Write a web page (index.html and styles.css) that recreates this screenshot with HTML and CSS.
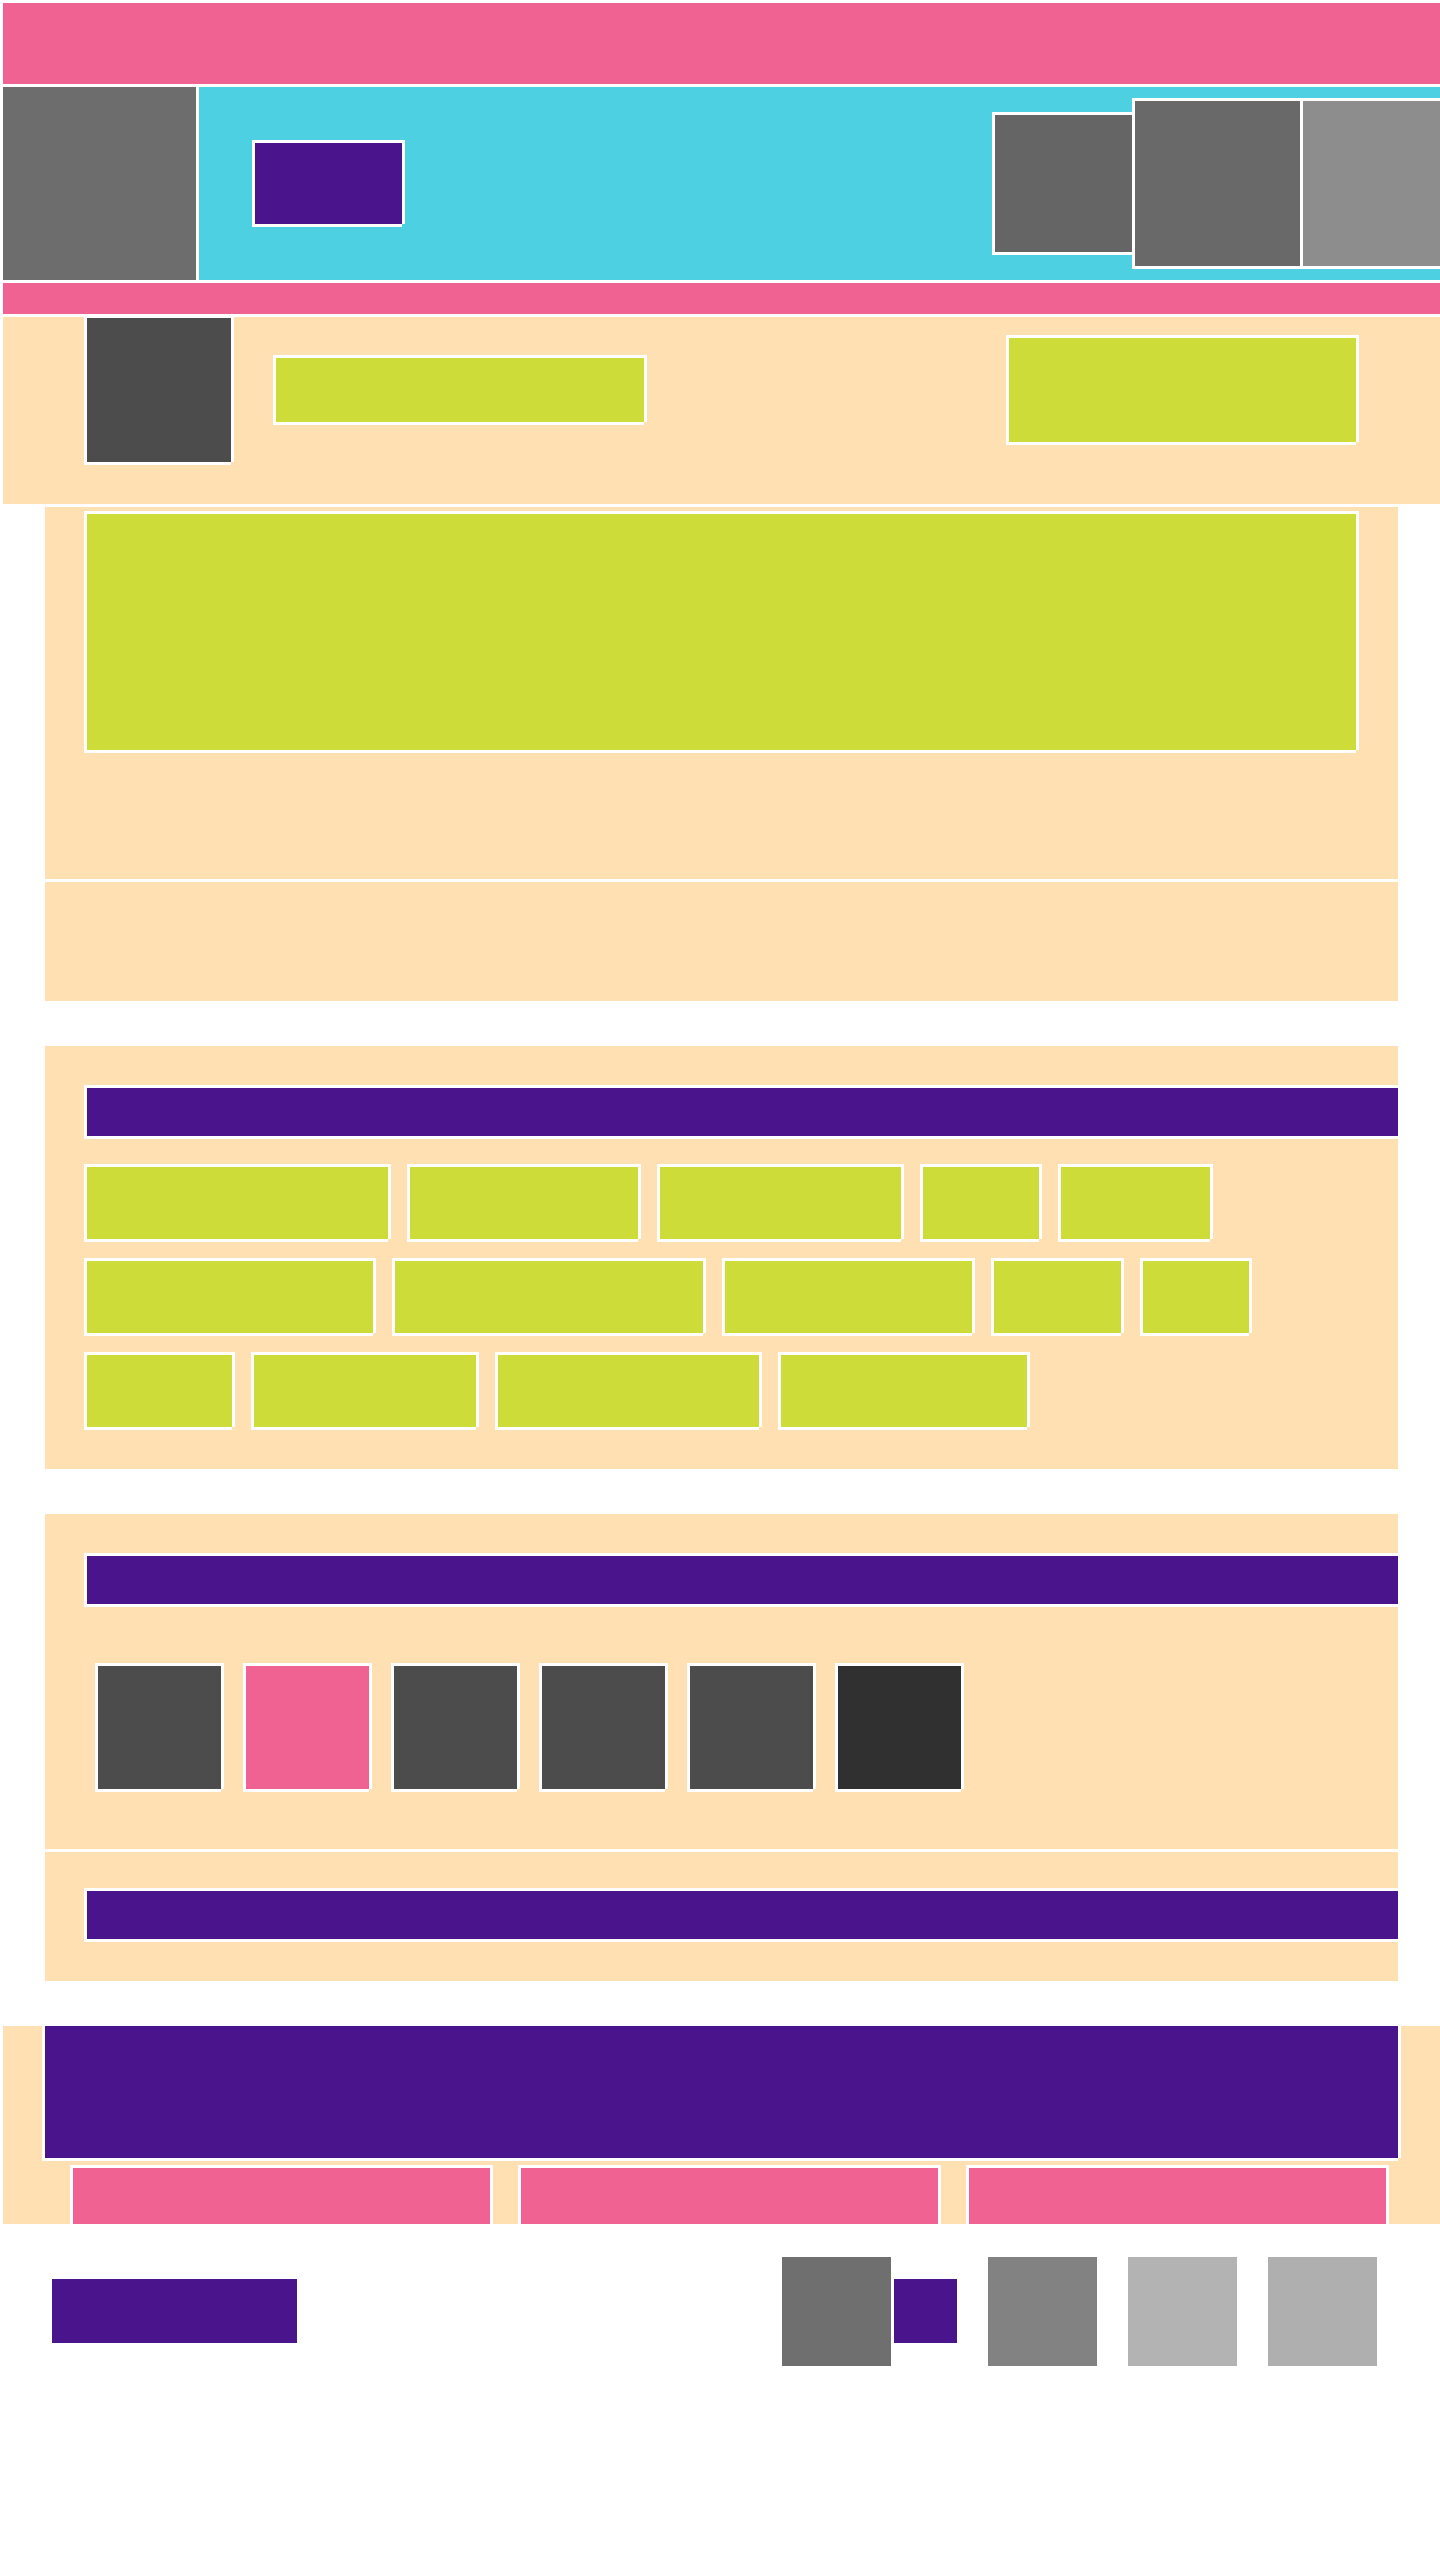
FILE: index.html
```html
<!DOCTYPE html>
<html lang="en">
<head>
<meta charset="utf-8">
<meta name="viewport" content="width=device-width, initial-scale=1">
<title>Page layout</title>
<link rel="stylesheet" href="styles.css">
</head>
<body>
<div class="page">
  <div class="banner"></div>
  <header class="topbar">
    <div class="block logo"></div>
    <div class="block brand"></div>
    <div class="actions">
      <div class="block action action-small"></div>
      <div class="block action"></div>
      <div class="block action action-last"></div>
    </div>
  </header>
  <div class="strip"></div>
  <section class="profile">
    <div class="block avatar"></div>
    <div class="block name"></div>
    <div class="block cta"></div>
  </section>
  <main class="content">
    <section class="group">
      <div class="panel summary"><div class="block summary-body"></div></div>
      <div class="panel note"></div>
    </section>
    <section class="group">
      <div class="panel">
        <div class="block heading"></div>
        <div class="tags">
          <div class="tag-row">
            <div class="block tag" style="width:301px"></div>
            <div class="block tag" style="width:228px"></div>
            <div class="block tag" style="width:241px"></div>
            <div class="block tag" style="width:116px"></div>
            <div class="block tag" style="width:149px"></div>
          </div>
          <div class="tag-row">
            <div class="block tag" style="width:286px"></div>
            <div class="block tag" style="width:308px"></div>
            <div class="block tag" style="width:247px"></div>
            <div class="block tag" style="width:127px"></div>
            <div class="block tag" style="width:106px"></div>
          </div>
          <div class="tag-row">
            <div class="block tag" style="width:145px"></div>
            <div class="block tag" style="width:222px"></div>
            <div class="block tag" style="width:261px"></div>
            <div class="block tag" style="width:246px"></div>
          </div>
        </div>
      </div>
    </section>
    <section class="group">
      <div class="panel gallery">
        <div class="block heading"></div>
        <div class="tiles">
          <div class="block tile"></div>
          <div class="block tile tile-pink"></div>
          <div class="block tile"></div>
          <div class="block tile"></div>
          <div class="block tile"></div>
          <div class="block tile tile-dark"></div>
        </div>
      </div>
      <div class="panel closing"><div class="block heading"></div></div>
    </section>
  </main>
  <section class="promo">
    <div class="block promo-title"></div>
    <div class="columns">
      <div class="block column"></div>
      <div class="block column"></div>
      <div class="block column"></div>
    </div>
  </section>
  <footer class="footer">
    <div class="copyright"></div>
    <div class="links">
      <div class="link-pair">
        <div class="link link-1"></div>
        <div class="link-label"></div>
      </div>
      <div class="link link-2"></div>
      <div class="link link-3"></div>
      <div class="link link-4"></div>
    </div>
  </footer>
</div>
</body>
</html>
```

FILE: styles.css
```css
:root {
  --pink: #f06292;
  --cyan: #4dd0e1;
  --peach: #ffe0b2;
  --lime: #cddc39;
  --purple: #4a148c;
  --charcoal: #4c4c4c;
}

* { box-sizing: border-box; }

body {
  margin: 0;
  background: #fff;
  font-family: "Liberation Sans", sans-serif;
}

.page {
  padding: 3px 0 0 3px;
  overflow: hidden;
}

/* White rule on every side, open at the lower right corner */
.block {
  flex-shrink: 0;
  box-shadow: -3px -3px #fff, 3px -3px #fff, -3px 3px #fff, 3px 0 #fff, 0 3px #fff;
}

.banner { height: 81px; background: var(--pink); }

.topbar {
  display: flex;
  align-items: center;
  height: 193px;
  margin: 3px 0;
  background: var(--cyan);
}
.logo { width: 193px; height: 193px; background: #6d6d6d; }
.brand { width: 147px; height: 81px; margin-left: 59px; background: var(--purple); }
.actions { display: flex; align-items: center; gap: 3px; margin-left: auto; }
.action { width: 165px; height: 165px; background: #696969; }
.action-small { width: 137px; height: 137px; background: #656565; }
.action-last { width: 137px; background: #8d8d8d; }

.strip { height: 31px; background: var(--pink); }

.profile {
  display: flex;
  align-items: center;
  height: 187px;
  margin-top: 3px;
  padding: 0 84px 41px;
  background: var(--peach);
}
.avatar { width: 144px; height: 144px; background: var(--charcoal); }
.name { width: 368px; height: 64px; margin-left: 45px; background: var(--lime); }
.cta { width: 347px; height: 104px; margin-left: auto; background: var(--lime); }

.content {
  display: flex;
  flex-direction: column;
  gap: 45px;
  margin: 3px 42px 45px;
}
.group { display: flex; flex-direction: column; gap: 3px; }
.panel {
  padding: 42px 0 42px 42px;
  overflow: hidden;
  background: var(--peach);
}
.summary { padding: 7px 42px 129px; }
.summary-body { height: 236px; background: var(--lime); }
.note { height: 119px; }
.heading { height: 48px; background: var(--purple); }
.closing { padding-top: 39px; }

.tags { display: flex; flex-direction: column; gap: 22px; margin-top: 31px; }
.tag-row { display: flex; gap: 22px; }
.tag { height: 72px; background: var(--lime); }

.gallery { padding-bottom: 60px; }
.tiles { display: flex; gap: 25px; padding: 62px 11px 0; }
.tile { width: 123px; height: 123px; background: var(--charcoal); }
.tile-pink { background: var(--pink); }
.tile-dark { background: #303030; }

.promo {
  overflow: hidden;
  background: var(--peach);
}
.promo-title { height: 132px; margin: 0 42px; background: var(--purple); }
.columns { display: flex; gap: 31px; margin: 10px 54px 0 70px; }
.column { flex: 1; height: 56px; background: var(--pink); }

.footer {
  display: flex;
  align-items: flex-start;
  justify-content: space-between;
  padding: 33px 63px 33px 49px;
}
.copyright { width: 245px; height: 64px; margin-top: 22px; background: var(--purple); }
.links { display: flex; gap: 31px; }
.link-pair { display: flex; gap: 3px; }
.link { width: 109px; height: 109px; }
.link-label { width: 63px; height: 64px; margin-top: 22px; background: var(--purple); }
.link-1 { background: #6f6f6f; }
.link-2 { background: #828282; }
.link-3 { background: #b3b3b3; }
.link-4 { background: #afafaf; }
```
